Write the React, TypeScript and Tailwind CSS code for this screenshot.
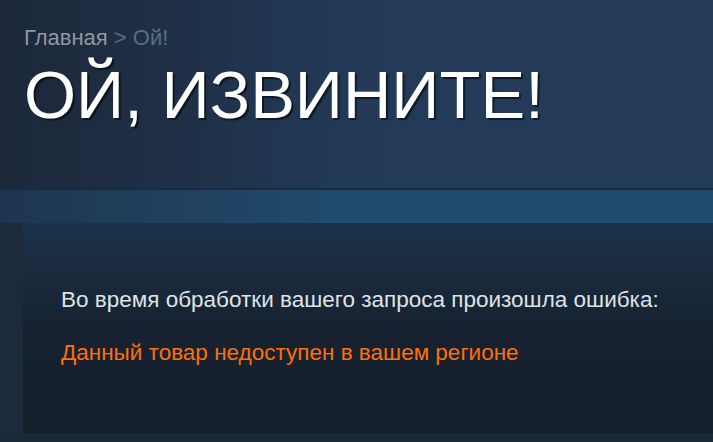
export default function App() {
  return (
    <div className="w-[713px] h-[442px] overflow-hidden bg-[#1b2838]" style={{ fontFamily: '"Liberation Sans", Arial, sans-serif' }}>
      <div className="h-[190px] bg-gradient-to-r from-[#1c2739] via-[#223a57] to-[#243c5a] border-b-2 border-[#1a2a3f] px-6 pt-[25px]">
        <div className="text-[22px] leading-[26px] text-[#8f98a0]">
          Главная <span className="text-[#56707f]">&gt; Ой!</span>
        </div>
        <h1 className="mt-[8px] text-[67px] leading-[72px] text-white [text-shadow:2px_2px_1px_rgba(0,0,0,0.55)]">
          ОЙ, ИЗВИНИТЕ!
        </h1>
      </div>
      <div className="h-[33px] bg-gradient-to-r from-[#1e3550] via-[#214c6e] to-[#214c6e]" />
      <div className="bg-gradient-to-r from-[#1c2a3c] to-[#1b2838] pl-[23px]">
        <div className="h-[210px] bg-gradient-to-b from-[#1b3249] via-[#172231] to-[#161f2c] px-[38px] pt-[63px]">
          <p className="text-[22.5px] leading-[28px] text-[#dfe3e6]">Во время обработки вашего запроса произошла ошибка:</p>
          <p className="mt-[25px] text-[22.5px] leading-[28px] text-[#ff6f08]">Данный товар недоступен в вашем регионе</p>
        </div>
      </div>
    </div>
  )
}
